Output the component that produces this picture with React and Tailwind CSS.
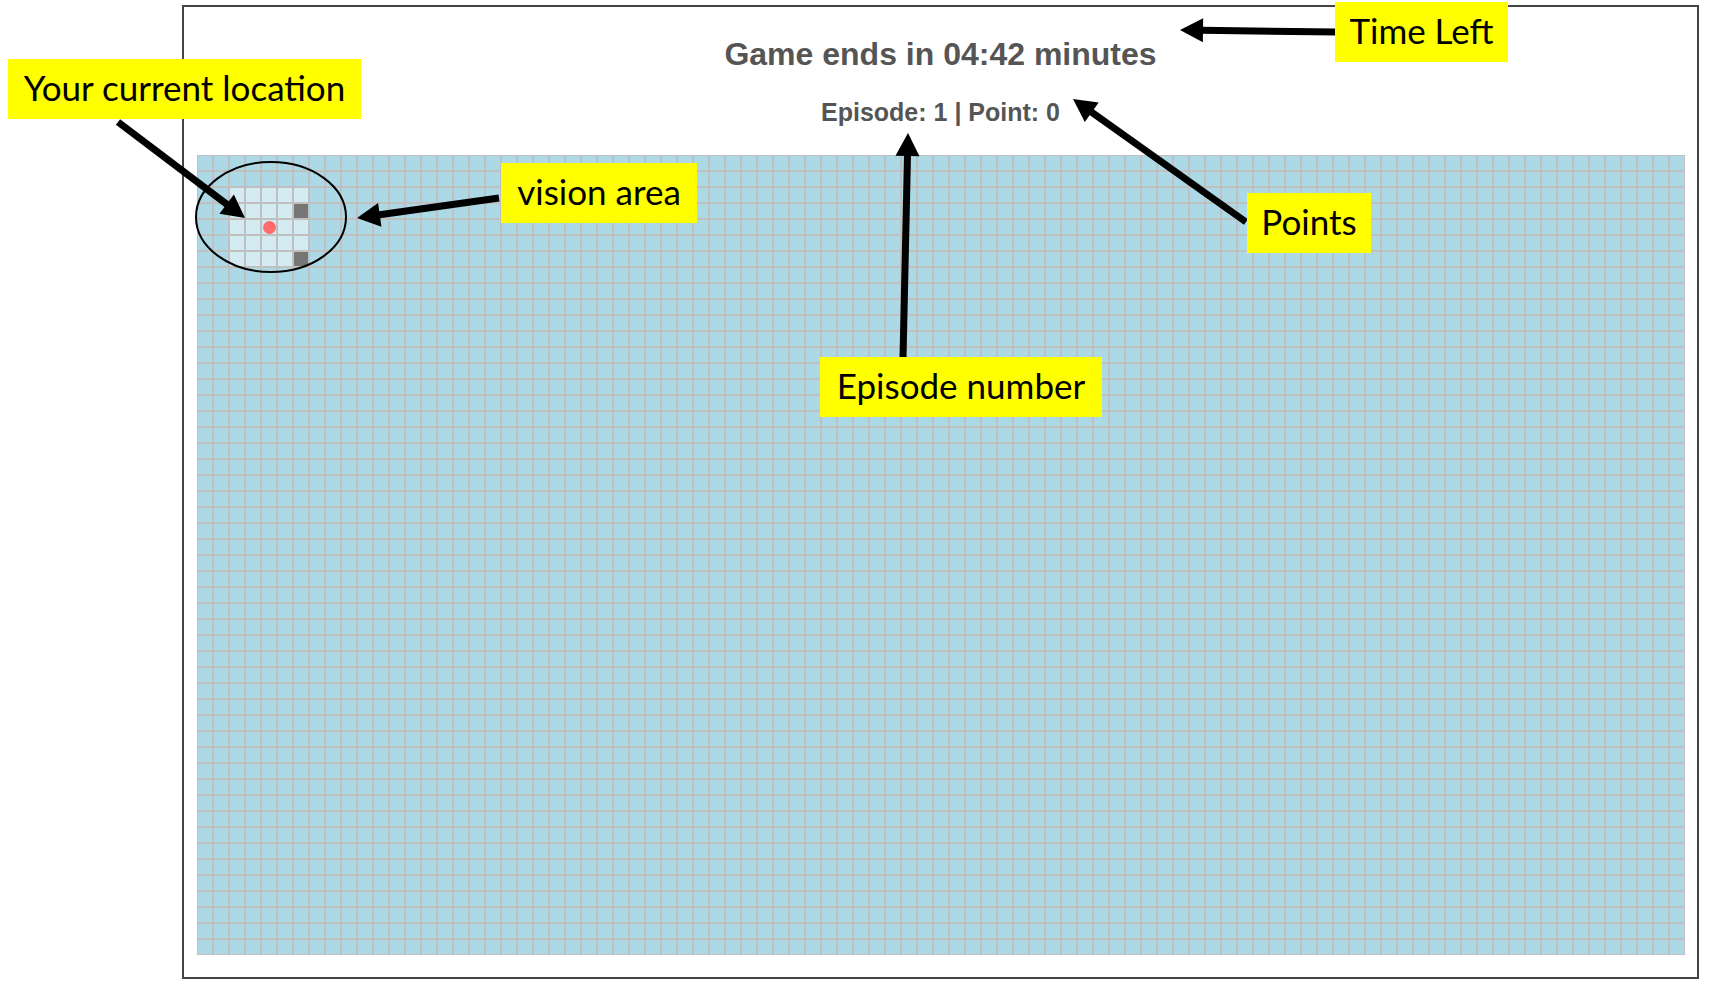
import React from "react";

const COLS = 93;
const ROWS = 50;

// vision window around the player (row, col)
const inVision = (r, c) => r >= 2 && r <= 6 && c >= 2 && c <= 6;
const walls = new Set(["3-6", "6-6"]);
const player = "4-4";

function Cell({ r, c }) {
  const key = `${r}-${c}`;
  let bg = "bg-[#add8e6]";
  if (inVision(r, c)) bg = "bg-[#d4ebf2]";
  if (walls.has(key)) bg = "bg-[#767676]";
  return (
    <div className={`flex h-4 w-4 items-center justify-center border border-[#c0c0c0] ${bg}`}>
      {key === player && <div className="h-[13px] w-[13px] rounded-full bg-[#ff6a6a]" />}
    </div>
  );
}

function Board() {
  const cells = [];
  for (let r = 0; r < ROWS; r++) {
    for (let c = 0; c < COLS; c++) cells.push(<Cell key={`${r}-${c}`} r={r} c={c} />);
  }
  return <div className="grid grid-cols-[repeat(93,16px)]">{cells}</div>;
}

// arrow with the head at (x2, y2)
function Arrow({ x1, y1, x2, y2, len = 23, wide = 24 }) {
  const dx = x2 - x1;
  const dy = y2 - y1;
  const d = Math.hypot(dx, dy);
  const ux = dx / d;
  const uy = dy / d;
  const bx = x2 - ux * len;
  const by = y2 - uy * len;
  const nx = -uy * (wide / 2);
  const ny = ux * (wide / 2);
  return (
    <g>
      <line x1={x1} y1={y1} x2={bx + ux * 2} y2={by + uy * 2} stroke="black" strokeWidth="7" />
      <polygon points={`${x2},${y2} ${bx + nx},${by + ny} ${bx - nx},${by - ny}`} fill="black" />
    </g>
  );
}

// yellow callout laid over the screenshot
function Note({ className, children }) {
  return (
    <div
      className={`absolute flex h-[60px] items-center justify-center bg-[#ffff00] pb-[3px] text-[35px] text-black font-['Lato',sans-serif] ${className}`}
    >
      {children}
    </div>
  );
}

export default function App() {
  return (
    <div className="relative h-[987px] w-[1710px] overflow-hidden bg-white pt-[5px] font-['Liberation_Sans',Arial,sans-serif]">
      <div className="ml-[182px] flex h-[974px] w-[1517px] flex-col items-center border-2 border-[#444]">
        <h1 className="mt-[29px] text-[32px] leading-[37px] font-bold text-[#555]">Game ends in 04:42 minutes</h1>
        <p className="mt-[25px] text-[25px] leading-[29px] font-bold text-[#555]">Episode: 1 | Point: 0</p>
        <div className="mt-[28px] self-start ml-[13px]">
          <Board />
        </div>
      </div>

      <svg className="pointer-events-none absolute inset-0" width="1710" height="987">
        <ellipse cx="271" cy="217" rx="75" ry="55" fill="none" stroke="black" strokeWidth="2" />
        <Arrow x1={118} y1={122} x2={245} y2={218} />
        <Arrow x1={499} y1={198} x2={357} y2={218} />
        <Arrow x1={1336} y1={32} x2={1180} y2={30} />
        <Arrow x1={1246} y1={222} x2={1073} y2={99} />
        <Arrow x1={903} y1={358} x2={908} y2={133} />
      </svg>

      <Note className="left-[8px] top-[59px] w-[353px]">Your current location</Note>
      <Note className="left-[501px] top-[163px] w-[196px]">vision area</Note>
      <Note className="left-[1335px] top-[2px] w-[173px]">Time Left</Note>
      <Note className="left-[1247px] top-[193px] w-[124px]">Points</Note>
      <Note className="left-[820px] top-[357px] w-[282px]">Episode number</Note>
    </div>
  );
}
